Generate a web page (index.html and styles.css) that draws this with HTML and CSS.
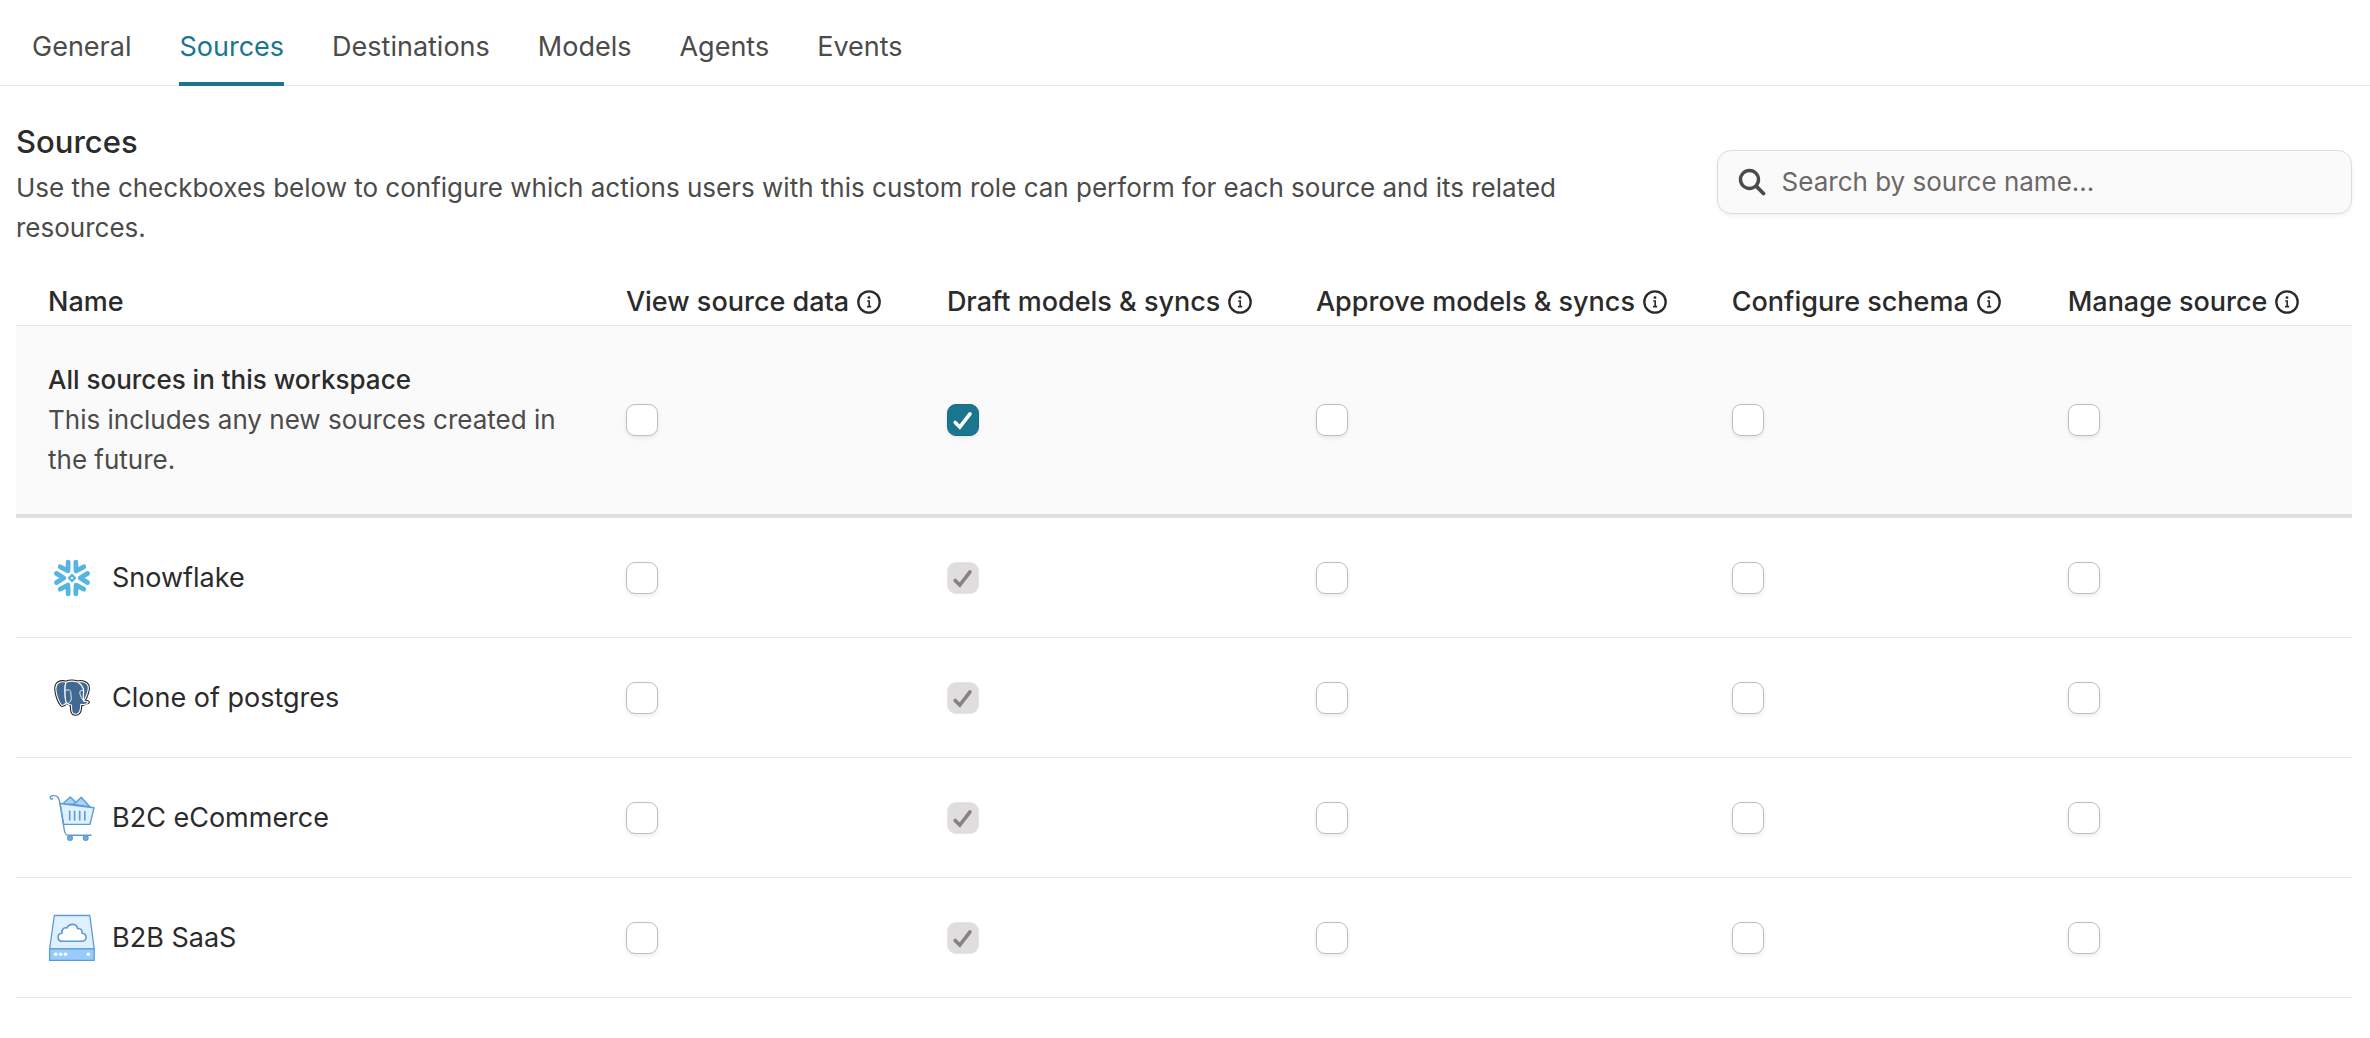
FILE: index.html
```html
<!DOCTYPE html>
<html lang="en">
<head>
	<meta charset="UTF-8">
	<title>Sources</title>
	<link rel="stylesheet" href="styles.css">
</head>

<body>
<svg class="sprite" aria-hidden="true">
	<symbol id="info" viewBox="0 0 24 24">
		<circle cx="12" cy="12" r="10.7" fill="none" stroke="currentColor" stroke-width="2.3"/>
		<circle cx="12" cy="7.6" r="1.4" fill="currentColor"/>
		<path d="M10.2 11h2v5.6M10 16.6h4.2" fill="none" stroke="currentColor" stroke-width="1.6"/>
	</symbol>
	<symbol id="chevron" viewBox="0 0 48 48">
		<path d="M8.4 19.4L15.8 24L8.4 28.6" fill="none" stroke="#56b4e4" stroke-width="4.8" stroke-linecap="round" stroke-linejoin="round"/>
	</symbol>
</svg>

<nav class="tabs">
	<a href="#general">General</a>
	<a href="#sources" class="active">Sources</a>
	<a href="#destinations">Destinations</a>
	<a href="#models">Models</a>
	<a href="#agents">Agents</a>
	<a href="#events">Events</a>
</nav>

<main>
	<div class="intro">
		<div class="intro-text">
			<h1>Sources</h1>
			<p>Use the checkboxes below to configure which actions users with this custom role can perform for each source and its related resources.</p>
		</div>
		<label class="search">
			<svg viewBox="0 0 28 28" aria-hidden="true">
				<circle cx="11.5" cy="11.5" r="9" fill="none" stroke="currentColor" stroke-width="3.4"/>
				<path d="M18.4 18.4L25.5 25.5" stroke="currentColor" stroke-width="3.8" stroke-linecap="round"/>
			</svg>
			<input type="text" placeholder="Search by source name..." aria-label="Search by source name">
		</label>
	</div>

	<table>
		<colgroup>
			<col class="col-name">
			<col class="col-view">
			<col class="col-draft">
			<col class="col-approve">
			<col class="col-configure">
			<col class="col-manage">
		</colgroup>
		<thead>
			<tr>
				<th>Name</th>
				<th><span class="head">View source data <svg><use href="#info"/></svg></span></th>
				<th><span class="head">Draft models &amp; syncs <svg><use href="#info"/></svg></span></th>
				<th><span class="head">Approve models &amp; syncs <svg><use href="#info"/></svg></span></th>
				<th><span class="head">Configure schema <svg><use href="#info"/></svg></span></th>
				<th><span class="head">Manage source <svg><use href="#info"/></svg></span></th>
			</tr>
		</thead>
		<tbody>
			<tr class="all">
				<td>
					<div class="all-title">All sources in this workspace</div>
					<div class="all-note">This includes any new sources created in the future.</div>
				</td>
				<td><input type="checkbox" aria-label="All sources: view source data"></td>
				<td><input type="checkbox" aria-label="All sources: draft models &amp; syncs" checked></td>
				<td><input type="checkbox" aria-label="All sources: approve models &amp; syncs"></td>
				<td><input type="checkbox" aria-label="All sources: configure schema"></td>
				<td><input type="checkbox" aria-label="All sources: manage source"></td>
			</tr>
			<tr>
				<td>
					<div class="source">
						<svg viewBox="0 0 48 48" aria-hidden="true">
							<use href="#chevron" width="48" height="48"/>
							<use href="#chevron" width="48" height="48" transform="rotate(60 24 24)"/>
							<use href="#chevron" width="48" height="48" transform="rotate(120 24 24)"/>
							<use href="#chevron" width="48" height="48" transform="rotate(180 24 24)"/>
							<use href="#chevron" width="48" height="48" transform="rotate(240 24 24)"/>
							<use href="#chevron" width="48" height="48" transform="rotate(300 24 24)"/>
							<path d="M24 21L27 24L24 27L21 24Z" fill="none" stroke="#56b4e4" stroke-width="2.4" stroke-linejoin="round"/>
						</svg>
						Snowflake
					</div>
				</td>
				<td><input type="checkbox" aria-label="Snowflake: view source data"></td>
				<td><input type="checkbox" aria-label="Snowflake: draft models &amp; syncs" checked disabled></td>
				<td><input type="checkbox" aria-label="Snowflake: approve models &amp; syncs"></td>
				<td><input type="checkbox" aria-label="Snowflake: configure schema"></td>
				<td><input type="checkbox" aria-label="Snowflake: manage source"></td>
			</tr>
			<tr>
				<td>
					<div class="source">
						<svg viewBox="0 0 48 48" aria-hidden="true" stroke-linejoin="round" stroke-linecap="round">
							<g fill="#222" stroke="#222" stroke-width="3.2">
								<path d="M18 8.2C12 6.6 7.8 9 7.8 14.5C8 20 10.4 28 13.5 31C15 32.2 16.6 30.6 18.4 28.6L22 30L23.5 32C23.5 36 23.4 40.2 27.4 40.2C31.5 40.2 32.4 37.6 32.8 31L40.3 28.2C39.5 27.3 37.3 27.5 35.7 27.1C39 22 41 15 40.1 12C38.3 7.7 33 7 29.7 8.1C25.5 6.7 21 7 18 8.2Z"/>
							</g>
							<g fill="#416991" stroke="#fff" stroke-width="1.1">
								<path d="M18 8.2C12 6.6 7.8 9 7.8 14.5C8 20 10.4 28 13.5 31C15 32.2 16.6 30.6 18.4 28.6C16.7 25 17.3 20.5 17 17C16.8 13.5 17 10.8 18 8.2Z"/>
								<path d="M29.7 8.1C33 7 38.3 7.7 40.1 12C41 15 39 22 35.7 27.1C34.5 24.5 35.6 20.5 35.7 17C35.5 13.5 32.5 10 29.7 8.1Z"/>
								<path d="M18 8.2C21 7 25.5 6.7 29.7 8.1C32.5 10 35.5 13.5 35.5 17C35.8 21 34.2 25 35.7 27.1C37.3 27.5 39.5 27.3 40.3 28.2C39 30.4 35 30.6 32.8 30.2C32.4 37.6 31.5 40.2 27.4 40.2C23.4 40.2 23.5 36 23.5 31C21 31.2 20 30 18.4 28.6C16.7 25 17.3 20.5 17 17C16.8 13.5 17 10.8 18 8.2Z"/>
							</g>
							<path d="M17.2 16.6C19.6 15.2 22.8 15.6 22.8 18.5C22.8 22 24 24.8 22.6 27.2C21.4 29.2 18.5 30.5 16.5 30.2M35.2 16.4C32.8 15.8 31.4 17.2 31.9 19.5C32.5 22.7 34 25 35.7 27.1" fill="none" stroke="#fff" stroke-width=".9"/>
						</svg>
						Clone of postgres
					</div>
				</td>
				<td><input type="checkbox" aria-label="Clone of postgres: view source data"></td>
				<td><input type="checkbox" aria-label="Clone of postgres: draft models &amp; syncs" checked disabled></td>
				<td><input type="checkbox" aria-label="Clone of postgres: approve models &amp; syncs"></td>
				<td><input type="checkbox" aria-label="Clone of postgres: configure schema"></td>
				<td><input type="checkbox" aria-label="Clone of postgres: manage source"></td>
			</tr>
			<tr>
				<td>
					<div class="source">
						<svg viewBox="0 0 48 48" aria-hidden="true" fill="none" stroke="#5c9bd6" stroke-width="1.4" stroke-linejoin="round" stroke-linecap="round">
							<path d="M14.5 10L22.3 3L30 10.5Z" fill="#a9d3fa"/>
							<path d="M25.5 10.5L33.3 3.3L42 13Z" fill="#a9d3fa"/>
							<path d="M12 9.5L46 13.8L42 30.4H15.7Z" fill="#dff0fe"/>
							<path d="M4.5 4.6C4.5 5.6 2.2 5.4 2.2 3.6C2.2 1.2 7.8 .8 9.8 3.2C11.5 5.2 12 9 12.4 12L16.2 35.5C16.8 39.5 17.6 41.3 20.4 41.3H43"/>
							<path d="M21.7 17v9M26.6 17.2v8.8M31.7 17.4v8.6M36.8 17.6v8.4" stroke-width="1.6"/>
							<circle cx="22" cy="44" r="2.3" fill="#78afe4"/>
							<circle cx="37.7" cy="44" r="2.3" fill="#78afe4"/>
						</svg>
						B2C eCommerce
					</div>
				</td>
				<td><input type="checkbox" aria-label="B2C eCommerce: view source data"></td>
				<td><input type="checkbox" aria-label="B2C eCommerce: draft models &amp; syncs" checked disabled></td>
				<td><input type="checkbox" aria-label="B2C eCommerce: approve models &amp; syncs"></td>
				<td><input type="checkbox" aria-label="B2C eCommerce: configure schema"></td>
				<td><input type="checkbox" aria-label="B2C eCommerce: manage source"></td>
			</tr>
			<tr>
				<td>
					<div class="source">
						<svg viewBox="0 0 48 48" aria-hidden="true" stroke="#5c9bd6" stroke-width="1.3" stroke-linejoin="round">
							<path d="M6.3 1.5H41.8L46.2 34.8H1.6Z" fill="#dff0fe"/>
							<path d="M1.6 34.8H46.2V46.4H1.6Z" fill="#98ccfd"/>
							<path d="M14.6 27.3C8.7 27.3 8.8 19.5 14 19.3C13 15.5 16.3 13 19 14C21.2 8.6 29 9.5 29.5 14.6C33 13.8 34.7 16.8 34 19.2C39.4 19.4 39.6 27.3 33.6 27.3Z" fill="#fff" stroke-width="1.6"/>
							<g fill="#fff" stroke="none">
								<circle cx="7.7" cy="40.3" r="1.8"/>
								<circle cx="12.7" cy="40.3" r="1.8"/>
								<circle cx="17.5" cy="40.3" r="1.8"/>
								<circle cx="40.3" cy="40.3" r="1.8"/>
							</g>
						</svg>
						B2B SaaS
					</div>
				</td>
				<td><input type="checkbox" aria-label="B2B SaaS: view source data"></td>
				<td><input type="checkbox" aria-label="B2B SaaS: draft models &amp; syncs" checked disabled></td>
				<td><input type="checkbox" aria-label="B2B SaaS: approve models &amp; syncs"></td>
				<td><input type="checkbox" aria-label="B2B SaaS: configure schema"></td>
				<td><input type="checkbox" aria-label="B2B SaaS: manage source"></td>
			</tr>
		</tbody>
	</table>
</main>
</body>
</html>
```

FILE: styles.css
```css
* {
	box-sizing: border-box;
}
body {
	margin: 0;
	background: #fff;
	color: #2b2b2b;
	font-family: Inter, "Liberation Sans", sans-serif;
	font-size: 27px;
	line-height: 40px;
}
.sprite {
	display: none;
}

/* tabs */
.tabs {
	display: flex;
	gap: 48px;
	padding: 0 32px;
	border-bottom: 1px solid #e8e8e8;
}
.tabs a {
	margin-bottom: -1px;
	padding: 27px 0 15px;
	border-bottom: 4px solid transparent;
	color: #4b4b4b;
	text-decoration: none;
}
.tabs a.active {
	color: #1a768e;
	border-bottom-color: #1a768e;
}

main {
	padding: 0 18px 0 16px;
}

/* title and search */
.intro {
	display: flex;
	align-items: flex-start;
	gap: 96px;
	padding-top: 36px;
}
.intro-text {
	flex: 1;
}
h1 {
	margin: 0 0 6px;
	font-size: 31px;
	font-weight: 500;
	line-height: 40px;
}
.intro p {
	margin: 0;
	color: #4b4b4b;
	font-size: 26px;
}
.search {
	display: flex;
	align-items: center;
	gap: 16px;
	width: 27.2%;
	height: 64px;
	margin-top: 28px;
	padding: 0 20px;
	background: #fafafa;
	border: 1px solid #dcdcdc;
	border-radius: 14px;
	box-shadow: 0 2px 4px rgba(0, 0, 0, .06);
}
.search svg {
	flex: none;
	width: 28px;
	height: 28px;
	color: #4b4b4b;
}
.search input {
	flex: 1;
	min-width: 0;
	padding: 0;
	border: none;
	outline: none;
	background: none;
	color: #2b2b2b;
	font: inherit;
	font-size: 26px;
}
.search input::placeholder {
	color: #6b6868;
	opacity: 1;
}

/* permissions table */
table {
	width: 100%;
	margin-top: 34px;
	border-collapse: separate;
	border-spacing: 0;
	table-layout: fixed;
}
.col-name { width: 24.74%; }
.col-view { width: 13.74%; }
.col-draft { width: 15.8%; }
.col-approve { width: 17.8%; }
.col-configure { width: 14.38%; }
.col-manage { width: 13.54%; }
th {
	padding: 0 0 3px 32px;
	border-bottom: 1px solid #e5e5e5;
	font-weight: 500;
	text-align: left;
	white-space: nowrap;
}
.head {
	display: flex;
	align-items: center;
	gap: 8px;
}
.head svg {
	width: 24px;
	height: 24px;
}
td {
	height: 120px;
	padding: 0 0 0 32px;
	border-bottom: 1px solid #e8e8e8;
	vertical-align: middle;
}
.all td {
	height: 192px;
	background: #fafafa;
	border-bottom: 4px solid #dfdfdf;
}
.all td:first-child {
	padding-right: 32px;
	font-size: 26px;
}
.all-title {
	font-weight: 500;
}
.all-note {
	color: #4b4b4b;
}
.source {
	display: flex;
	align-items: center;
	gap: 16px;
}
.source svg {
	width: 48px;
	height: 48px;
}
input[type=checkbox] {
	appearance: none;
	display: block;
	width: 32px;
	height: 32px;
	margin: 0;
	background: #fff center / 100% no-repeat;
	border: 1px solid #bfbfbf;
	border-radius: 9px;
	box-shadow: 0 2px 4px rgba(0, 0, 0, .08);
}
input[type=checkbox]:checked {
	background-color: #1a768e;
	background-image: url("data:image/svg+xml,%3Csvg xmlns='http://www.w3.org/2000/svg' viewBox='0 0 30 30'%3E%3Cpath d='M7.2 17.4L11.8 22L22 8.8' fill='none' stroke='white' stroke-width='3.6' stroke-linecap='round'/%3E%3C/svg%3E");
	border-color: #176b82;
}
input[type=checkbox]:disabled {
	background-color: #dfdddd;
	background-image: url("data:image/svg+xml,%3Csvg xmlns='http://www.w3.org/2000/svg' viewBox='0 0 30 30'%3E%3Cpath d='M7.2 17.4L11.8 22L22 8.8' fill='none' stroke='%23858383' stroke-width='3.6' stroke-linecap='round'/%3E%3C/svg%3E");
	border-color: #e6e4e4;
	box-shadow: none;
}
```
